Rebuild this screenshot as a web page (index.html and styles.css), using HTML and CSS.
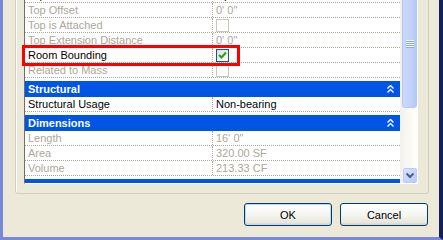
FILE: index.html
```html
<!DOCTYPE html>
<html lang="en">
<head>
    <meta charset="UTF-8">
    <title>Wall Properties</title>
    <link rel="stylesheet" href="styles.css">
</head>
<body>
    <div class="window">
        <div class="groupbox">
            <div class="grid">
                <div class="props">
                    <div class="list">
                        <div class="row"><span class="name">Top Constraint</span><span class="value">Up to level: Level 2</span></div>
                        <div class="row dim"><span class="name">Top Offset</span><span class="value">0' 0"</span></div>
                        <div class="row dim"><span class="name">Top is Attached</span><span class="value"><span class="check"></span></span></div>
                        <div class="row dim"><span class="name">Top Extension Distance</span><span class="value">0' 0"</span></div>
                        <div class="row"><span class="name">Room Bounding</span><span class="value"><span class="check checked"><svg width="11" height="11" viewBox="0 0 11 11"><path d="M2 5 L4.5 7.5 L9 2.5" fill="none" stroke="#21a121" stroke-width="2"/></svg></span></span></div>
                        <div class="row dim"><span class="name">Related to Mass</span><span class="value"><span class="check"></span></span></div>

                        <div class="section"><span>Structural</span><svg class="collapse" width="7" height="8" viewBox="0 0 7 8"><path d="M0.5 3.5 L3.5 0.5 L6.5 3.5 M0.5 7.5 L3.5 4.5 L6.5 7.5" fill="none" stroke="#fff" stroke-width="1.4"/></svg></div>
                        <div class="row"><span class="name">Structural Usage</span><span class="value">Non-bearing</span></div>

                        <div class="section"><span>Dimensions</span><svg class="collapse" width="7" height="8" viewBox="0 0 7 8"><path d="M0.5 3.5 L3.5 0.5 L6.5 3.5 M0.5 7.5 L3.5 4.5 L6.5 7.5" fill="none" stroke="#fff" stroke-width="1.4"/></svg></div>
                        <div class="row dim"><span class="name">Length</span><span class="value">16' 0"</span></div>
                        <div class="row dim"><span class="name">Area</span><span class="value">320.00 SF</span></div>
                        <div class="row dim"><span class="name">Volume</span><span class="value">213.33 CF</span></div>

                        <div class="section"><span>Identity Data</span></div>
                    </div>
                </div>
                <div class="scrollbar">
                    <div class="thumb"><span class="grip"></span></div>
                    <div class="arrow-down">
                        <svg width="12" height="13" viewBox="0 0 12 13"><path d="M2.5 4.5 L6 8 L9.5 4.5" fill="none" stroke="#4d6185" stroke-width="2"/></svg>
                    </div>
                </div>
            </div>
            <div class="marker"></div>
        </div>

        <div class="buttons">
            <button class="btn default">OK</button>
            <button class="btn">Cancel</button>
        </div>
    </div>
</body>
</html>
```

FILE: styles.css
```css
* {
    box-sizing: border-box;
}

body {
    margin: 0;
    width: 443px;
    height: 240px;
    overflow: hidden;
    background-color: #ece9d8;
    font-family: 'Liberation Sans', Arial, sans-serif;
    font-size: 11px;
}

.window {
    height: 240px;
    border-left: 3px solid #7a88d8;
    border-bottom: 3px solid #7a88d8;
    border-right: 4px solid #14205a;
    display: flex;
    flex-direction: column;
    overflow: hidden;
}

.groupbox {
    position: relative;
    margin: -10px 0 0 12px;
    width: 414px;
    padding: 0 10px 9px 8px;
    border: 1px solid #d0d0bf;
    border-radius: 3px;
    box-shadow: inset 1px 1px 0 #fff;
}

.grid {
    display: flex;
    height: 193px;
    background-color: #fff;
    border: 1px solid;
    border-color: #716f64 #fff #fff #716f64;
    overflow: hidden;
}

.props {
    flex: none;
    width: 375px;
    overflow: hidden;
}

.list {
    margin-top: -4px;
}

.row {
    display: flex;
    height: 15px;
    line-height: 14px;
    border-bottom: 1px dotted #aca899;
    color: #000;
}

.row.dim {
    color: #aca899;
}

.name {
    flex: none;
    width: 187px;
    padding-left: 3px;
    white-space: nowrap;
}

.value {
    flex: 1;
    padding-left: 3px;
    border-left: 1px dotted #aca899;
    white-space: nowrap;
}

.check {
    display: block;
    width: 13px;
    height: 13px;
    margin-top: 1px;
    border: 1px solid #c9c7ba;
    background-color: #fff;
}

.check.checked {
    border-color: #1c5180;
    background: linear-gradient(135deg, #dcdcd7, #fff);
}

.check svg {
    display: block;
}

.section {
    display: flex;
    align-items: center;
    justify-content: space-between;
    height: 16px;
    margin-top: 3px;
    padding: 0 6px 0 3px;
    background-color: #0055e5;
    color: #fff;
    font-weight: bold;
}

.scrollbar {
    flex: none;
    width: 17px;
    display: flex;
    flex-direction: column;
    background: linear-gradient(to right, #f3f1ec, #fefefb);
}

.thumb {
    height: 116px;
    width: 15px;
    margin-left: 2px;
    display: flex;
    flex-direction: column;
    align-items: center;
    border: 1px solid #b4c8f6;
    border-radius: 0 0 3px 3px;
    background: linear-gradient(to right, #cad8fc, #c3d3fb 50%, #b5c8f5);
}

.grip {
    width: 8px;
    height: 8px;
    margin-top: 47px;
    background: repeating-linear-gradient(#eef4fe 0 1px, #8cabf0 1px 2px);
}

.arrow-down {
    margin-top: auto;
    margin-left: 3px;
    width: 14px;
    height: 15px;
    display: flex;
    align-items: center;
    justify-content: center;
    border: 1px solid #b8cbf5;
    border-radius: 2px;
    background: linear-gradient(135deg, #dae4fd, #b6cafa);
}

.marker {
    position: absolute;
    left: 6px;
    top: 54px;
    width: 218px;
    height: 21px;
    border: 3px solid #ff0000;
}

.buttons {
    display: flex;
    justify-content: flex-end;
    gap: 8px;
    margin-top: 9px;
    padding-right: 11px;
}

.btn {
    width: 88px;
    height: 23px;
    padding: 0;
    border: 1px solid #003c74;
    border-radius: 3px;
    background: linear-gradient(#fff, #f4f4f0 55%, #e8e6dc 88%, #d6d0c5);
    color: #000;
    font-family: 'Liberation Sans', Arial, sans-serif;
    font-size: 11px;
}

.btn.default {
    box-shadow: inset 0 0 0 1px #c3d5f5;
}
```
